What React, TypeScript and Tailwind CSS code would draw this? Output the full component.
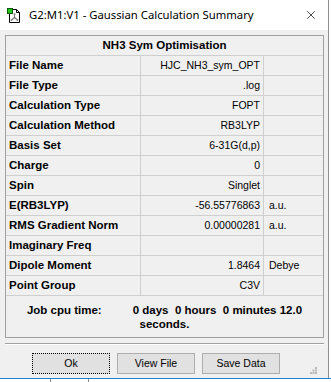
import { X } from "lucide-react";

const rows: [string, string, string][] = [
  ["File Name", "HJC_NH3_sym_OPT", ""],
  ["File Type", ".log", ""],
  ["Calculation Type", "FOPT", ""],
  ["Calculation Method", "RB3LYP", ""],
  ["Basis Set", "6-31G(d,p)", ""],
  ["Charge", "0", ""],
  ["Spin", "Singlet", ""],
  ["E(RB3LYP)", "-56.55776863", "a.u."],
  ["RMS Gradient Norm", "0.00000281", "a.u."],
  ["Imaginary Freq", "", ""],
  ["Dipole Moment", "1.8464", "Debye"],
  ["Point Group", "C3V", ""],
];

const AppIcon = () => (
  <svg width="14" height="15" viewBox="0 0 14 15">
    <path d="M2.5 1.5h7l3 3v10h-10z" fill="#fff" stroke="#000" />
    <path d="M9.5 1.5v3h3" fill="none" stroke="#000" />
    <path d="M7.5 6v3.5M7.5 9.5l-3 2.5M7.5 9.5l3 2.5" stroke="#777" strokeWidth="1.2" />
    <circle cx="7.5" cy="6" r="1" fill="#888" />
    <circle cx="4.5" cy="12" r="1" fill="#888" />
    <circle cx="10.5" cy="12" r="1" fill="#888" />
    <rect x="0.5" y="0.5" width="5" height="5" fill="#22c51e" stroke="#0b5a0b" />
  </svg>
);

const Gripper = () => (
  <svg width="7" height="7" viewBox="0 0 7 7" className="absolute right-[11px] bottom-[4px]">
    <rect x="5" y="0" width="2" height="2" fill="#b8b8b8" />
    <rect x="2.5" y="2.5" width="2" height="2" fill="#b8b8b8" />
    <rect x="5" y="2.5" width="2" height="2" fill="#b8b8b8" />
    <rect x="0" y="5" width="2" height="2" fill="#b8b8b8" />
    <rect x="2.5" y="5" width="2" height="2" fill="#b8b8b8" />
    <rect x="5" y="5" width="2" height="2" fill="#b8b8b8" />
  </svg>
);

export default function App() {
  return (
    <div className="w-[331px] h-[382px] bg-white flex flex-col font-['Liberation_Sans',Arial,sans-serif] text-black overflow-hidden">
      <div className="w-[329px] h-[378px] flex flex-col border-r border-[#8f8f8f] relative">
        <div className="h-[30px] bg-white flex items-center pl-[7px] pr-[10px]">
          <AppIcon />
          <span className="ml-[8px] text-[11.3px] font-['Noto_Sans',sans-serif] leading-none">
            G2:M1:V1 - Gaussian Calculation Summary
          </span>
          <X className="ml-auto" size={14} strokeWidth={1.2} />
        </div>

        <div className="flex-1 bg-[#f0f0f0] flex flex-col px-[5px] pt-[5px]">
          <div className="w-[319px] border border-[#a0a0a0] flex flex-col">
            <div className="h-[20px] border-b border-[#cfcfcf] flex items-center justify-center text-[11.5px] font-bold">
              NH3 Sym Optimisation
            </div>
            {rows.map(([label, value, unit]) => (
              <div key={label} className="h-[20px] border-b border-[#cfcfcf] flex">
                <div className="w-[135px] border-r border-[#cfcfcf] flex items-center pl-[3px] text-[11.5px] font-bold">
                  {label}
                </div>
                <div className="w-[123px] border-r border-[#cfcfcf] flex items-center justify-end pr-[3px] text-[10.5px]">
                  {value}
                </div>
                <div className="w-[59px] flex items-center pl-[5px] text-[10.5px]">{unit}</div>
              </div>
            ))}
            <div className="h-[41px] flex flex-col items-center pt-[7px] text-[11.5px] font-bold leading-[14px]">
              <div className="flex gap-[31px] whitespace-pre">
                <span>Job cpu time:</span>
                <span>0 days  0 hours  0 minutes 12.0</span>
              </div>
              <span>seconds.</span>
            </div>
          </div>

          <div className="mt-[5px] w-[319px] border-t border-[#a0a0a0] border-b-white border-b h-[2px]" />

          <div className="flex gap-[7px] pl-[27px] mt-[8px] text-[10.5px]">
            <button className="w-[78px] h-[21px] bg-[#e1e1e1] border border-dotted border-black">Ok</button>
            <button className="w-[78px] h-[21px] bg-[#e1e1e1] border border-[#adadad]">View File</button>
            <button className="w-[78px] h-[21px] bg-[#e1e1e1] border border-[#adadad]">Save Data</button>
          </div>
          <Gripper />
        </div>
      </div>
      <div className="h-[1px] bg-[#1883d7]" />
      <div className="flex-1 bg-white flex">
        <div className="ml-[50px] w-[1px] bg-[#888]" />
        <div className="ml-[37px] w-[1px] bg-[#888]" />
      </div>
    </div>
  );
}
